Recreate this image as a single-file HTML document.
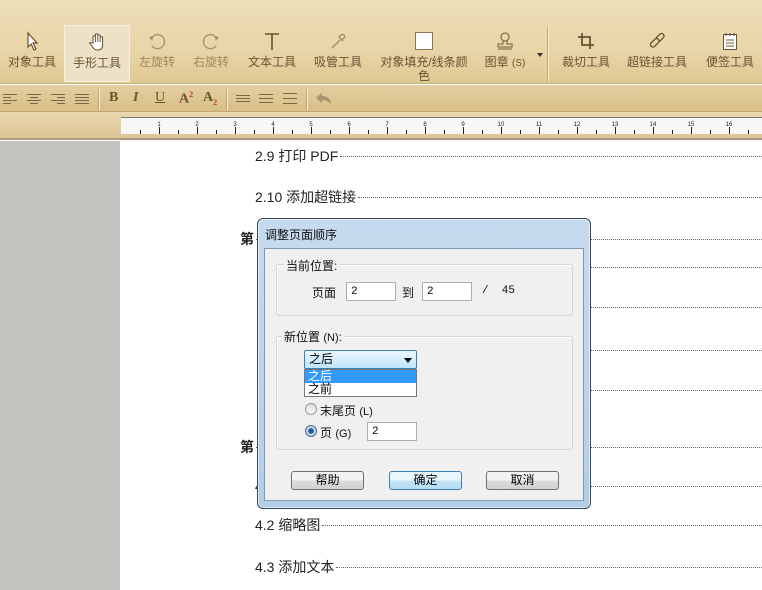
<!DOCTYPE html>
<html><head><meta charset="utf-8"><style>
*{margin:0;padding:0;box-sizing:border-box}
body{width:762px;height:590px;overflow:hidden;position:relative;background:#fff;font-family:"Liberation Sans","Noto Sans CJK SC",sans-serif;}
.abs{position:absolute}
#tb{left:0;top:0;width:762px;height:84px;background:linear-gradient(#eedfb9,#e8d5a8 60%,#e0c892);border-bottom:1px solid #c9b07a}
.tool{position:absolute;top:25px;height:57px;text-align:center;font-size:12px;color:#6a5230;line-height:14px}
.tool .lbl{position:absolute;top:30px;left:0;right:0}
.tool svg{position:absolute;top:6px;left:50%;margin-left:-10px}
#fb{left:0;top:85px;width:762px;height:27px;background:linear-gradient(#e4cf9f,#d8bf88);border-bottom:1px solid #c4a870}
#rl{left:0;top:112px;width:762px;height:28px;background:linear-gradient(#e9d8b0,#ddc594);border-bottom:2px solid #a89a80}
#ruler{left:121px;top:117px;width:641px;height:17px;background:#f7f7f5;border-top:1px solid #777;}
#gray{left:0;top:141px;width:120px;height:449px;background:#c4c3bf}
.line{position:absolute;left:255px;font-size:14px;color:#222;white-space:nowrap;width:507px;display:flex;align-items:baseline}
.line .d{flex:1;border-bottom:1px dotted #666;margin-left:2px;height:0;position:relative;top:-4px}
.sep{position:absolute;width:2px;background:#f6ecd5;border-left:1px solid #c4a870}
#dlg{left:257px;top:218px;width:334px;height:291px;border:1px solid #3b4b5c;border-radius:6px;background:linear-gradient(#c7dbef,#b3cde6);box-shadow:0 0 0 1px rgba(255,255,255,.5) inset}
#cli{left:6px;top:29px;width:320px;height:253px;background:#f0f0f0;border:1px solid #8599ae}
.grp{position:absolute;border:1px solid #d5d5d5;border-radius:3px;box-shadow:1px 1px 0 #fff inset}
.glab{position:absolute;background:#f0f0f0;font-size:12px;padding:0 2px;color:#111}
.inp{position:absolute;background:#fff;border:1px solid #abadb3;font-size:11px;padding-left:4px;line-height:17px;font-family:"Liberation Mono",monospace}
.t{position:absolute;font-size:12px;color:#111;white-space:nowrap}
.btn{position:absolute;height:19px;width:73px;border:1px solid #707070;border-radius:3px;background:linear-gradient(#f2f2f2 50%,#dcdcdc 50%,#d0d0d0);font-size:12px;text-align:center;line-height:17px}
</style></head><body>
<div id="tb" class="abs">
 <div class="tool" style="left:4px;width:56px"><svg width="20" height="20"><path d="M6 2 L6 16 L9 13 L12 19 L14 18 L11 12 L15 12 Z" fill="#fff" stroke="#6a5230" stroke-width="1.2"/></svg><div class="lbl">对象工具</div></div>
 <div class="tool" style="left:64px;width:66px;background:#ede2c8;border:1px solid #f7f0e0"><svg width="20" height="20"><path d="M6 11 V5 a1.2 1.2 0 0 1 2.4 0 V10 V3 a1.2 1.2 0 0 1 2.4 0 V10 V4 a1.2 1.2 0 0 1 2.4 0 V10 V6 a1.2 1.2 0 0 1 2.4 0 V13 q0 5 -5 5 q-3 0 -5 -3 l-3 -4 q1 -1 2 0z" fill="#fff" stroke="#6a5230" stroke-width="1"/></svg><div class="lbl">手形工具</div></div>
 <div class="tool" style="left:134px;width:46px;color:#a08860"><svg width="20" height="20"><path d="M4 8 A7 7 0 1 1 5 15" fill="none" stroke="#a89270" stroke-width="1.4"/><path d="M2 6 L5 10 L7 5Z" fill="#a89270"/></svg><div class="lbl">左旋转</div></div>
 <div class="tool" style="left:188px;width:46px;color:#a08860"><svg width="20" height="20"><path d="M16 8 A7 7 0 1 0 15 15" fill="none" stroke="#a89270" stroke-width="1.4"/><path d="M18 6 L15 10 L13 5Z" fill="#a89270"/></svg><div class="lbl">右旋转</div></div>
 <div class="tool" style="left:244px;width:56px"><svg width="20" height="20"><path d="M3 3 H17 M10 3 V19" stroke="#6a5230" stroke-width="1.6"/></svg><div class="lbl">文本工具</div></div>
 <div class="tool" style="left:310px;width:56px"><svg width="20" height="20"><path d="M4 17 L12 9 M11 6 L15 10 M13 4 a2 2 0 0 1 3 3 l-2 2 l-3 -3z" fill="none" stroke="#a08860" stroke-width="1.3"/></svg><div class="lbl">吸管工具</div></div>
 <div class="tool" style="left:376px;width:96px"><svg width="20" height="20" style="top:6px"><rect x="1.5" y="1.5" width="17" height="17" fill="#fff" stroke="#8a7550"/></svg><div class="lbl" style="top:30px">对象填充/线条颜<br>色</div></div>
 <div class="tool" style="left:482px;width:46px"><svg width="20" height="20"><circle cx="10" cy="6" r="4" fill="none" stroke="#8a7550" stroke-width="1.3"/><path d="M8 10 V13 H3 V16 H17 V13 H12 V10 M3 18 H17" fill="none" stroke="#8a7550" stroke-width="1.3"/></svg><div class="lbl" style="font-size:12px">图章 <span style="font-size:10px">(S)</span></div></div>
 <div class="abs" style="left:537px;top:53px;width:0;height:0;border:3px solid transparent;border-top:4px solid #333"></div>
 <div class="sep" style="left:547px;top:26px;height:56px"></div>
 <div class="tool" style="left:558px;width:56px"><svg width="20" height="20"><path d="M6 2 V14 H18 M2 6 H14 V18" fill="none" stroke="#6a5230" stroke-width="1.8"/></svg><div class="lbl">裁切工具</div></div>
 <div class="tool" style="left:624px;width:66px"><svg width="20" height="20"><path d="M4 12 l4 -4 a2.5 2.5 0 0 1 3.5 3.5 l-4 4 a2.5 2.5 0 0 1 -3.5 -3.5z M9 7 l4 -4 a2.5 2.5 0 0 1 3.5 3.5 l-4 4" fill="none" stroke="#6a5230" stroke-width="1.3"/></svg><div class="lbl">超链接工具</div></div>
 <div class="tool" style="left:702px;width:56px"><svg width="20" height="20"><rect x="3.5" y="3.5" width="13" height="15" fill="#fff" stroke="#6a5230"/><path d="M6 2 V5 M10 2 V5 M14 2 V5 M6 9 H14 M6 12 H14 M6 15 H14" stroke="#6a5230"/></svg><div class="lbl">便签工具</div></div>
</div>
<div id="fb" class="abs">
 <svg class="abs" style="left:0;top:0" width="340" height="27">
 <g stroke="#7a6545" stroke-width="1">
  <path d="M3 9.5H17M3 12.5H11M3 15.5H17M3 18.5H11"/>
  <path d="M27 9.5H41M30 12.5H38M27 15.5H41M30 18.5H38"/>
  <path d="M51 9.5H65M57 12.5H65M51 15.5H65M57 18.5H65"/>
  <path d="M75 9.5H89M75 12.5H89M75 15.5H89M75 18.5H89"/>
  <path d="M236 10.5H250M236 13.5H250M236 16.5H250"/>
  <path d="M259 9.5H273M259 13.5H273M259 17.5H273"/>
  <path d="M283 8.5H297M283 13.5H297M283 18.5H297"/>
 </g>
 <path d="M316 13 L322 8 V11 Q330 11 331 19 Q327 15 322 15 V18Z" fill="#a89270"/>
 </svg>
 <div class="sep" style="left:98px;top:3px;height:22px"></div>
 <div class="sep" style="left:226px;top:3px;height:22px"></div>
 <div class="sep" style="left:306px;top:3px;height:22px"></div>
 <div class="abs" style="left:109px;top:5px;font:bold 14px 'Liberation Serif',serif;color:#6a5230">B</div>
 <div class="abs" style="left:133px;top:5px;font:italic bold 14px 'Liberation Serif',serif;color:#6a5230">I</div>
 <div class="abs" style="left:155px;top:5px;font:14px 'Liberation Serif',serif;color:#6a5230;text-decoration:underline">U</div>
 <div class="abs" style="left:179px;top:5px;font:bold 14px 'Liberation Serif',serif;color:#6a5230">A<sup style="font-size:8px;color:#c0392b">2</sup></div>
 <div class="abs" style="left:203px;top:5px;font:bold 14px 'Liberation Serif',serif;color:#6a5230">A<sub style="font-size:8px;color:#c0392b">2</sub></div>
</div>
<div id="rl" class="abs"></div>
<div id="ruler" class="abs">
<svg width="641" height="17" style="display:block">
<g font-size="6" font-family="Liberation Sans" fill="#222" text-anchor="middle">
<text x="38" y="8">1</text><text x="76" y="8">2</text><text x="114" y="8">3</text><text x="152" y="8">4</text><text x="190" y="8">5</text><text x="228" y="8">6</text><text x="266" y="8">7</text><text x="304" y="8">8</text><text x="342" y="8">9</text><text x="380" y="8">10</text><text x="418" y="8">11</text><text x="456" y="8">12</text><text x="494" y="8">13</text><text x="532" y="8">14</text><text x="570" y="8">15</text><text x="608" y="8">16</text>
</g>
<path stroke="#222" d="M19.5 12V16M38.5 9V16M57.5 12V16M76.5 9V16M95.5 12V16M114.5 9V16M133.5 12V16M152.5 9V16M171.5 12V16M190.5 9V16M209.5 12V16M228.5 9V16M247.5 12V16M266.5 9V16M285.5 12V16M304.5 9V16M323.5 12V16M342.5 9V16M361.5 12V16M380.5 9V16M399.5 12V16M418.5 9V16M437.5 12V16M456.5 9V16M475.5 12V16M494.5 9V16M513.5 12V16M532.5 9V16M551.5 12V16M570.5 9V16M589.5 12V16M608.5 9V16M627.5 12V16"/>
</svg>
</div>
<div id="gray" class="abs"></div>

<div class="line" style="top:146px">2.9 打印 PDF<span class="d"></span></div>
<div class="line" style="top:187px">2.10 添加超链接<span class="d"></span></div>
<div class="line" style="top:229px;left:240px;width:522px"><b>第</b><span class="d"></span></div>
<div class="line" style="top:271px"><span class="d"></span></div>
<div class="line" style="top:311px"><span class="d"></span></div>
<div class="line" style="top:354px"><span class="d"></span></div>
<div class="line" style="top:394px"><span class="d"></span></div>
<div class="line" style="top:437px;left:240px;width:522px"><b>第</b><span class="d"></span></div>
<div class="line" style="top:478px">4<span class="d"></span></div>
<div class="line" style="top:515px">4.2 缩略图<span class="d"></span></div>
<div class="line" style="top:557px">4.3 添加文本<span class="d"></span></div>

<div id="dlg" class="abs">
 <div class="t" style="left:7px;top:7px;font-size:12px">调整页面顺序</div>
 <div id="cli" class="abs">
  <div class="grp" style="left:11px;top:15px;width:297px;height:52px"></div>
  <div class="glab" style="left:19px;top:8px">当前位置:</div>
  <div class="t" style="left:47px;top:35px;font-size:12px">页面</div>
  <div class="inp" style="left:81px;top:33px;width:50px;height:19px;padding-top:1px">2</div>
  <div class="t" style="left:137px;top:35px">到</div>
  <div class="inp" style="left:157px;top:33px;width:50px;height:19px;padding-top:1px">2</div>
  <div class="t" style="left:217px;top:36px;font-family:'Liberation Mono',monospace;font-size:11px">/&nbsp;&nbsp;45</div>
  <div class="grp" style="left:11px;top:87px;width:297px;height:114px"></div>
  <div class="glab" style="left:17px;top:79px">新位置 <span style="font-size:11px">(N)</span>:</div>
  <div class="abs" style="left:39px;top:101px;width:113px;height:19px;border:1px solid #3c7fb1;border-radius:2px;background:linear-gradient(#eaf6fd,#bee6fd);font-size:12px;padding-left:4px;line-height:17px">之后<span class="abs" style="right:4px;top:7px;border:4px solid transparent;border-top:5px solid #000;border-bottom:0"></span></div>
  <div class="abs" style="left:39px;top:120px;width:113px;height:28px;border:1px solid #777;background:#fff;font-size:12px;line-height:13px">
   <div style="background:#3399ff;color:#fff;padding-left:3px">之后</div><div style="padding-left:3px">之前</div></div>
  <div class="abs" style="left:40px;top:154px;width:12px;height:12px;border-radius:50%;border:1px solid #999;background:linear-gradient(#ddd,#fafafa)"></div>
  <div class="t" style="left:55px;top:153px">末尾页 <span style="font-size:11px">(L)</span></div>
  <div class="abs" style="left:40px;top:176px;width:12px;height:12px;border-radius:50%;border:1px solid #4a6a8a;background:radial-gradient(#1c5a9a 35%,#c8d8e8 45%)"></div>
  <div class="t" style="left:55px;top:175px">页 <span style="font-size:11px">(G)</span></div>
  <div class="inp" style="left:102px;top:173px;width:50px;height:19px;padding-top:1px">2</div>
  <div class="btn" style="left:26px;top:222px">帮助</div>
  <div class="btn" style="left:124px;top:222px;border-color:#3c7fb1;background:linear-gradient(#eaf6fd 50%,#c4e5f6 50%,#b6dcf2)">确定</div>
  <div class="btn" style="left:221px;top:222px">取消</div>
 </div>
</div>
</body></html>
